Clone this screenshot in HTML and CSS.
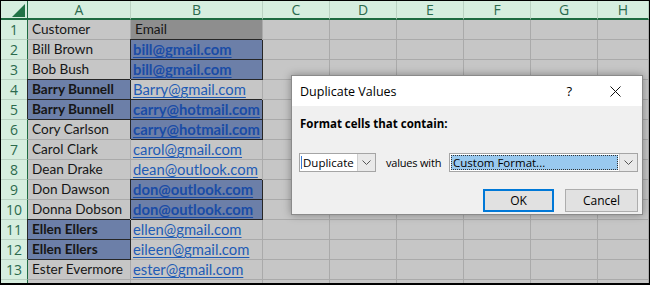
FILE: index.html
```html
<!DOCTYPE html>
<html>
<head>
<meta charset="utf-8">
<link rel="stylesheet" href="styles.css">
</head>
<body>
<div class="sheet">
  <div class="grid">
    <div class="corner"><svg width="14" height="13" viewBox="0 0 14 13"><polygon points="13,0 13,13 0,13" fill="#217346"/></svg></div>
    <div class="ch">A</div><div class="ch">B</div><div class="ch">C</div><div class="ch">D</div><div class="ch">E</div><div class="ch">F</div><div class="ch">G</div><div class="ch last">H</div>

    <div class="rh">1</div><div class="c">Customer</div><div class="c head">Email</div><div class="c"></div><div class="c"></div><div class="c"></div><div class="c"></div><div class="c"></div><div class="c"></div>
    <div class="rh">2</div><div class="c">Bill Brown</div><div class="c em hl"><span class="lk b">bill@gmail.com</span></div><div class="c"></div><div class="c"></div><div class="c"></div><div class="c"></div><div class="c"></div><div class="c"></div>
    <div class="rh">3</div><div class="c">Bob Bush</div><div class="c em hl"><span class="lk b">bill@gmail.com</span></div><div class="c"></div><div class="c"></div><div class="c"></div><div class="c"></div><div class="c"></div><div class="c"></div>
    <div class="rh">4</div><div class="c hl b">Barry Bunnell</div><div class="c em"><span class="lk">Barry@gmail.com</span></div><div class="c"></div><div class="c"></div><div class="c"></div><div class="c"></div><div class="c"></div><div class="c"></div>
    <div class="rh">5</div><div class="c hl b">Barry Bunnell</div><div class="c em hl"><span class="lk b">carry@hotmail.com</span></div><div class="c"></div><div class="c"></div><div class="c"></div><div class="c"></div><div class="c"></div><div class="c"></div>
    <div class="rh">6</div><div class="c">Cory Carlson</div><div class="c em hl"><span class="lk b">carry@hotmail.com</span></div><div class="c"></div><div class="c"></div><div class="c"></div><div class="c"></div><div class="c"></div><div class="c"></div>
    <div class="rh">7</div><div class="c">Carol Clark</div><div class="c em"><span class="lk">carol@gmail.com</span></div><div class="c"></div><div class="c"></div><div class="c"></div><div class="c"></div><div class="c"></div><div class="c"></div>
    <div class="rh">8</div><div class="c">Dean Drake</div><div class="c em"><span class="lk">dean@outlook.com</span></div><div class="c"></div><div class="c"></div><div class="c"></div><div class="c"></div><div class="c"></div><div class="c"></div>
    <div class="rh">9</div><div class="c">Don Dawson</div><div class="c em hl"><span class="lk b">don@outlook.com</span></div><div class="c"></div><div class="c"></div><div class="c"></div><div class="c"></div><div class="c"></div><div class="c"></div>
    <div class="rh">10</div><div class="c">Donna Dobson</div><div class="c em hl"><span class="lk b">don@outlook.com</span></div><div class="c"></div><div class="c"></div><div class="c"></div><div class="c"></div><div class="c"></div><div class="c"></div>
    <div class="rh">11</div><div class="c hl b">Ellen Ellers</div><div class="c em"><span class="lk">ellen@gmail.com</span></div><div class="c"></div><div class="c"></div><div class="c"></div><div class="c"></div><div class="c"></div><div class="c"></div>
    <div class="rh">12</div><div class="c hl b">Ellen Ellers</div><div class="c em"><span class="lk">eileen@gmail.com</span></div><div class="c"></div><div class="c"></div><div class="c"></div><div class="c"></div><div class="c"></div><div class="c"></div>
    <div class="rh">13</div><div class="c">Ester Evermore</div><div class="c em"><span class="lk">ester@gmail.com</span></div><div class="c"></div><div class="c"></div><div class="c"></div><div class="c"></div><div class="c"></div><div class="c"></div>
    <div class="rh"></div><div class="c"></div><div class="c"></div><div class="c"></div><div class="c"></div><div class="c"></div><div class="c"></div><div class="c"></div><div class="c"></div>
  </div>

  <div class="dialog">
    <div class="dtitle">
      <span class="dname">Duplicate Values</span>
      <span class="help">?</span>
      <svg class="close" width="11" height="11" viewBox="0 0 11 11"><path d="M0.5 0.5 L10.5 10.5 M10.5 0.5 L0.5 10.5" stroke="#111" stroke-width="1"/></svg>
    </div>
    <div class="dbody">
      <div class="dlabel">Format cells that contain:</div>
      <div class="drow">
        <div class="combo small">
          <div class="field"><span class="caret"></span>Duplicate</div>
          <div class="dd"><svg width="9" height="5" viewBox="0 0 9 5"><path d="M0.5 0.5 L4.5 4.5 L8.5 0.5" fill="none" stroke="#555" stroke-width="1"/></svg></div>
        </div>
        <span class="vw">values with</span>
        <div class="combo big">
          <div class="field sel"><span class="seltext">Custom Format...</span></div>
          <div class="dd"><svg width="9" height="5" viewBox="0 0 9 5"><path d="M0.5 0.5 L4.5 4.5 L8.5 0.5" fill="none" stroke="#555" stroke-width="1"/></svg></div>
        </div>
      </div>
      <div class="dbtns">
        <button class="btn ok">OK</button>
        <button class="btn">Cancel</button>
      </div>
    </div>
  </div>
</div>
</body>
</html>
```

FILE: styles.css
```css
* { box-sizing: border-box; }
html, body { margin: 0; padding: 0; background: #000; }
.sheet {
  position: relative;
  width: 650px;
  height: 285px;
  border: 1px solid #000;
  border-bottom-width: 2px;
  overflow: hidden;
  background: #c6c6c6;
}
.grid {
  display: grid;
  grid-template-columns: 27px 103px 132px 67px 67px 67px 67px 67px 51px;
  grid-template-rows: 19px repeat(14, 20px);
  font-family: Lato, "Liberation Sans", sans-serif;
  font-size: 13.6px;
  color: #161616;
}
.corner {
  background: #d6eedf;
  border-right: 1px solid #1e6b41;
  border-bottom: 2px solid #1e6b41;
  display: flex;
  align-items: flex-end;
  justify-content: flex-end;
  padding: 0 1px 1px 0;
}
.ch {
  background: #d6eedf;
  border-right: 1px solid #b9d2c2;
  border-bottom: 2px solid #1e6b41;
  color: #2b6a4d;
  font-family: "Open Sans", "Noto Sans", sans-serif;
  font-size: 14px;
  display: flex;
  align-items: center;
  justify-content: center;
  line-height: 1;
}
.rh {
  background: #d6eedf;
  border-right: 1px solid #1e6b41;
  border-bottom: 1px solid #b9d2c2;
  color: #2b6a4d;
  font-family: "Open Sans", "Noto Sans", sans-serif;
  font-size: 14px;
  display: flex;
  align-items: center;
  justify-content: center;
  line-height: 1;
}
.c {
  background: #c6c6c6;
  border-right: 1px solid #aaaaaa;
  border-bottom: 1px solid #aaaaaa;
  padding-left: 4px;
  display: flex;
  align-items: center;
  white-space: nowrap;
  overflow: hidden;
  line-height: 1;
}
.c.em { padding-left: 2px; }
.c.head { background: #8e8e8e; padding-left: 4px; }
.c.hl {
  background: #6c7fa8;
  border-right-color: #262626;
  border-bottom-color: #262626;
  box-shadow: -1px -1px 0 #262626;
}
.b { font-weight: 700; }
.lk { color: #1f5cb5; text-decoration: underline; text-underline-offset: 2px; font-size: 14.8px; }
.hl .lk { color: #1a4ca6; }

.dialog {
  position: absolute;
  left: 290px;
  top: 74px;
  width: 352px;
  height: 140px;
  border: 1px solid #8a8a8a;
  background: #f0f0f0;
  box-shadow: 0 0 8px rgba(0,0,0,0.35);
  font-family: "Open Sans", "Noto Sans", sans-serif;
  font-size: 12px;
  color: #000;
  display: flex;
  flex-direction: column;
}
.dtitle {
  height: 30px;
  background: #fff;
  display: flex;
  align-items: center;
  padding-left: 8px;
  padding-right: 21px;
}
.dname { flex: 1; font-size: 12.5px; }
.help { margin-right: 38px; font-size: 13px; }
.close { display: block; }
.dbody { padding: 11px 0 0 7px; flex: 1; }
.dlabel { font-weight: 700; font-size: 11.5px; margin-left: 1px; line-height: 14px; }
.drow {
  display: flex;
  align-items: center;
  margin-top: 22px;
  height: 19px;
  white-space: nowrap;
}
.combo {
  display: flex;
  flex-shrink: 0;
  height: 19px;
  border: 1px solid #a5a5a5;
  background: #fff;
}
.combo.small { width: 77px; }
.combo.big { width: 189px; }
.field {
  flex: 1;
  display: flex;
  align-items: center;
  padding-left: 3px;
  font-size: 11.5px;
  position: relative;
}
.caret {
  position: absolute;
  left: 1px;
  top: 2px;
  width: 1px;
  height: 13px;
  background: #3a7bd5;
}
.field.sel { padding: 1px; }
.seltext {
  flex: 1;
  height: 100%;
  background: #99c9ef;
  outline: 1px dotted #333;
  outline-offset: -1px;
  display: flex;
  align-items: center;
  padding-left: 2px;
}
.dd {
  width: 18px;
  background: #e9e9e9;
  border-left: 1px solid #cfcfcf;
  display: flex;
  align-items: center;
  justify-content: center;
}
.dd svg { display: block; }
.vw { margin: 0 10px 0 10px; font-size: 11px; letter-spacing: -0.2px; flex-shrink: 0; width: 53px; }
.dbtns {
  display: flex;
  justify-content: flex-end;
  gap: 11px;
  margin-top: 17px;
  padding-right: 4px;
}
.btn {
  height: 23px;
  width: 73px;
  background: #e1e1e1;
  border: 1px solid #adadad;
  font-family: "Open Sans", "Noto Sans", sans-serif;
  font-size: 12px;
  color: #000;
  padding: 0;
}
.btn.ok { width: 71px; border: 2px solid #0078d7; }
```
